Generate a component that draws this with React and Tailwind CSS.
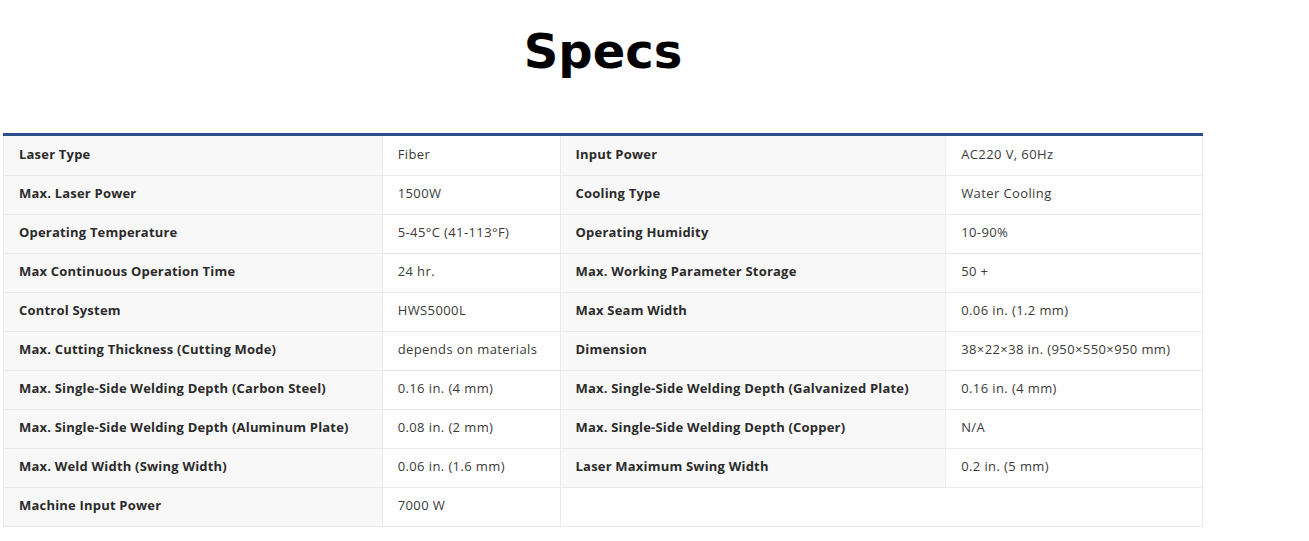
import React from 'react';

const rows = [
  ['Laser Type', 'Fiber', 'Input Power', 'AC220 V, 60Hz'],
  ['Max. Laser Power', '1500W', 'Cooling Type', 'Water Cooling'],
  ['Operating Temperature', '5-45°C (41-113°F)', 'Operating Humidity', '10-90%'],
  ['Max Continuous Operation Time', '24 hr.', 'Max. Working Parameter Storage', '50 +'],
  ['Control System', 'HWS5000L', 'Max Seam Width', '0.06 in. (1.2 mm)'],
  ['Max. Cutting Thickness (Cutting Mode)', 'depends on materials', 'Dimension', '38×22×38 in. (950×550×950 mm)'],
  ['Max. Single-Side Welding Depth (Carbon Steel)', '0.16 in. (4 mm)', 'Max. Single-Side Welding Depth (Galvanized Plate)', '0.16 in. (4 mm)'],
  ['Max. Single-Side Welding Depth (Aluminum Plate)', '0.08 in. (2 mm)', 'Max. Single-Side Welding Depth (Copper)', 'N/A'],
  ['Max. Weld Width (Swing Width)', '0.06 in. (1.6 mm)', 'Laser Maximum Swing Width', '0.2 in. (5 mm)'],
  ['Machine Input Power', '7000 W'],
];

const labelCls = 'bg-[#f8f8f8] border border-[#ebebeb] px-[15px] pb-[2px] font-bold text-[#2b2b2b] tracking-[0.2px]';
const valueCls = 'bg-white border border-[#ebebeb] px-[15px] pb-[2px] text-[#3a3a3a] tracking-[0.4px]';

export default function App() {
  return (
    <div className="bg-white min-h-[541px] font-['Open_Sans','Lato',sans-serif]">
      <div className="ml-[3px] w-[1200px]">
        <h1 className="pt-[21px] h-[133px] text-center text-[48px] leading-[60px] font-bold text-black font-['DejaVu_Sans',sans-serif]">
          Specs
        </h1>
        <table className="w-full border-collapse border-t-[3px] border-t-[#2b4d8c] text-[13px]">
          <colgroup>
            <col className="w-[379px]" />
            <col className="w-[178px]" />
            <col className="w-[386px]" />
            <col className="w-[257px]" />
          </colgroup>
          <tbody>
            {rows.map((r, i) => (
              <tr key={i} className={i === 0 ? 'h-[41px]' : 'h-[39px]'}>
                <td className={labelCls}>{r[0]}</td>
                <td className={valueCls}>{r[1]}</td>
                {r.length > 2 ? (
                  <>
                    <td className={labelCls}>{r[2]}</td>
                    <td className={valueCls}>{r[3]}</td>
                  </>
                ) : (
                  <td colSpan={2} className={valueCls}></td>
                )}
              </tr>
            ))}
          </tbody>
        </table>
      </div>
    </div>
  );
}
